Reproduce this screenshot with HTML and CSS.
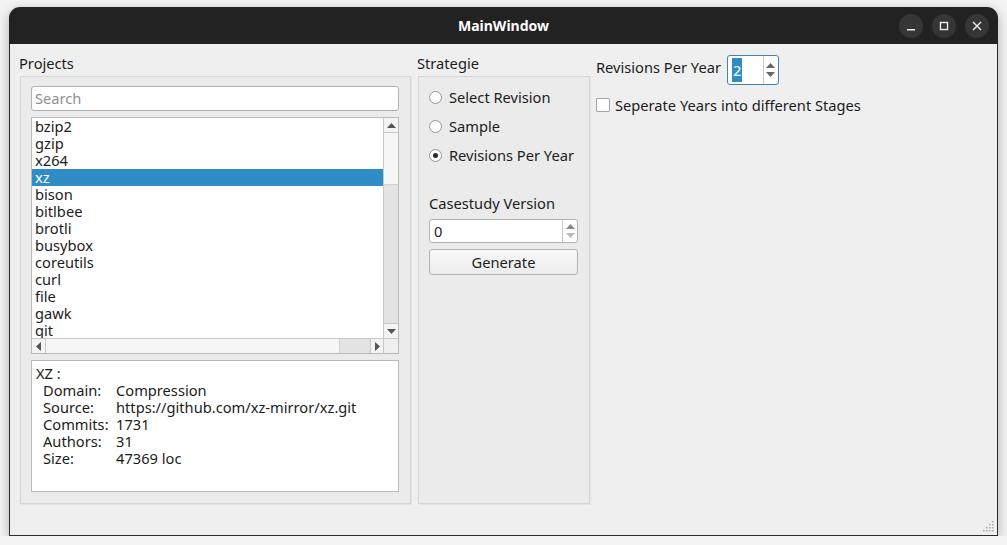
FILE: index.html
```html
<!DOCTYPE html>
<html lang="en">
<head>
    <meta charset="UTF-8">
    <meta name="viewport" content="width=device-width, initial-scale=1.0">
    <title>MainWindow</title>
    <link rel="stylesheet" href="styles.css">
</head>
<body>
    <div class="window">
        <div class="titlebar">
            <span></span>
            <span class="title">MainWindow</span>
            <div class="controls">
                <span class="ctl">
                    <svg width="24" height="24" viewBox="0 0 24 24"><rect x="8" y="15" width="8" height="1.5" fill="#eee"/></svg>
                </span>
                <span class="ctl">
                    <svg width="24" height="24" viewBox="0 0 24 24"><rect x="8.5" y="8.5" width="7" height="7" fill="none" stroke="#eee" stroke-width="1.4"/></svg>
                </span>
                <span class="ctl">
                    <svg width="24" height="24" viewBox="0 0 24 24"><path d="M8 8 L16 16 M16 8 L8 16" stroke="#eee" stroke-width="1.4"/></svg>
                </span>
            </div>
        </div>
        <div class="content">
            <div class="col projects-col">
                <div class="group-label">Projects</div>
                <div class="group projects">
                    <input class="search" type="text" placeholder="Search">
                    <div class="list">
                        <div class="list-items">
                            <div class="item">bzip2</div>
                            <div class="item">gzip</div>
                            <div class="item">x264</div>
                            <div class="item selected">xz</div>
                            <div class="item">bison</div>
                            <div class="item">bitlbee</div>
                            <div class="item">brotli</div>
                            <div class="item">busybox</div>
                            <div class="item">coreutils</div>
                            <div class="item">curl</div>
                            <div class="item">file</div>
                            <div class="item">gawk</div>
                            <div class="item">git</div>
                        </div>
                        <div class="vscroll">
                            <div class="sb-btn">
                                <svg width="9" height="5" viewBox="0 0 9 5"><path d="M0 5 L4.5 0 L9 5 Z" fill="#555"/></svg>
                            </div>
                            <div class="sb-handle v"></div>
                            <div class="sb-track"></div>
                            <div class="sb-btn">
                                <svg width="9" height="5" viewBox="0 0 9 5"><path d="M0 0 L4.5 5 L9 0 Z" fill="#555"/></svg>
                            </div>
                        </div>
                        <div class="hscroll">
                            <div class="sb-btn">
                                <svg width="5" height="9" viewBox="0 0 5 9"><path d="M5 0 L0 4.5 L5 9 Z" fill="#555"/></svg>
                            </div>
                            <div class="sb-handle h"></div>
                            <div class="sb-track h"></div>
                            <div class="sb-btn">
                                <svg width="5" height="9" viewBox="0 0 5 9"><path d="M0 0 L5 4.5 L0 9 Z" fill="#555"/></svg>
                            </div>
                        </div>
                        <div class="corner"></div>
                    </div>
                    <div class="info">
                        <div class="info-title">XZ :</div>
                        <div class="info-grid">
                            <span>Domain:</span><span>Compression</span>
                            <span>Source:</span><span>https://github.com/xz-mirror/xz.git</span>
                            <span>Commits:</span><span>1731</span>
                            <span>Authors:</span><span>31</span>
                            <span>Size:</span><span>47369 loc</span>
                        </div>
                    </div>
                </div>
            </div>

            <div class="col strategy-col">
                <div class="group-label">Strategie</div>
                <div class="group strategy">
                    <label class="radio-row"><span class="radio"></span>Select Revision</label>
                    <label class="radio-row"><span class="radio"></span>Sample</label>
                    <label class="radio-row"><span class="radio checked"></span>Revisions Per Year</label>
                    <div class="cs-label">Casestudy Version</div>
                    <div class="spinbox wide">
                        <span class="spin-value">0</span>
                        <span class="spin-arrows">
                            <svg width="9" height="5" viewBox="0 0 9 5"><path d="M0 5 L4.5 0 L9 5 Z" fill="#888"/></svg>
                            <svg width="9" height="5" viewBox="0 0 9 5"><path d="M0 0 L4.5 5 L9 0 Z" fill="#bbb"/></svg>
                        </span>
                    </div>
                    <button class="btn" type="button">Generate</button>
                </div>
            </div>

            <div class="col options-col">
                <div class="rpy-row">
                    <span class="rpy-label">Revisions Per Year</span>
                    <div class="spinbox small focus">
                        <span class="spin-value"><span class="sel">2</span></span>
                        <span class="spin-arrows">
                            <svg width="9" height="5" viewBox="0 0 9 5"><path d="M0 5 L4.5 0 L9 5 Z" fill="#666"/></svg>
                            <svg width="9" height="5" viewBox="0 0 9 5"><path d="M0 0 L4.5 5 L9 0 Z" fill="#666"/></svg>
                        </span>
                    </div>
                </div>
                <label class="check-row"><span class="checkbox"></span>Seperate Years into different Stages</label>
            </div>

            <svg class="grip" width="12" height="12" viewBox="0 0 12 12">
                <rect x="9" y="0" width="1.5" height="1.5" fill="#aaa"/>
                <rect x="6" y="3" width="1.5" height="1.5" fill="#aaa"/>
                <rect x="9" y="3" width="1.5" height="1.5" fill="#aaa"/>
                <rect x="3" y="6" width="1.5" height="1.5" fill="#aaa"/>
                <rect x="6" y="6" width="1.5" height="1.5" fill="#aaa"/>
                <rect x="9" y="6" width="1.5" height="1.5" fill="#aaa"/>
                <rect x="0" y="9" width="1.5" height="1.5" fill="#aaa"/>
                <rect x="3" y="9" width="1.5" height="1.5" fill="#aaa"/>
                <rect x="6" y="9" width="1.5" height="1.5" fill="#aaa"/>
                <rect x="9" y="9" width="1.5" height="1.5" fill="#aaa"/>
            </svg>
        </div>
    </div>
</body>
</html>
```

FILE: styles.css
```css
* {
    box-sizing: border-box;
}
body {
    margin: 0;
    background: #f3f3f3;
    font-family: "Noto Sans", "DejaVu Sans", sans-serif;
    font-size: 14.67px;
    color: #1c1c1c;
}
.window {
    margin: 7px 0 0 9px;
    width: 989px;
    height: 529px;
    border-radius: 11px 11px 0 0;
    overflow: hidden;
    box-shadow: 0 3px 12px rgba(0, 0, 0, 0.28);
    display: flex;
    flex-direction: column;
}
.titlebar {
    height: 37px;
    flex: none;
    background: #222222;
    display: grid;
    grid-template-columns: 1fr auto 1fr;
    align-items: center;
}
.title {
    color: #ffffff;
    font-weight: bold;
    font-size: 14px;
}
.controls {
    justify-self: end;
    display: flex;
    gap: 9px;
    padding-right: 9px;
}
.ctl {
    width: 24px;
    height: 24px;
    border-radius: 50%;
    background: #363636;
    display: flex;
}
.content {
    flex: 1;
    background: #efefef;
    border: 1px solid #2c2c2c;
    border-top: none;
    display: flex;
    padding: 10px 0 0 9px;
    position: relative;
}
.group-label {
    height: 22px;
    line-height: 19px;
}
.group {
    margin-left: 1px;
    height: 428px;
    background: #ebebeb;
    border: 1px solid #d6d6d6;
    box-shadow: 1px 1px 0 #e4e4e4;
}

/* projects */
.projects-col {
    width: 392px;
}
.projects {
    padding: 9px 11px 0 10px;
    display: flex;
    flex-direction: column;
    gap: 6px;
}
.search {
    height: 25px;
    flex: none;
    border: 1px solid #b2b2b2;
    border-radius: 3px;
    padding: 0 3px 1px;
    font-family: inherit;
    font-size: 14.67px;
    background: #ffffff;
    outline: none;
}
.search::placeholder {
    color: #8e8e8e;
}
.list {
    height: 237px;
    flex: none;
    border: 1px solid #bababa;
    background: #ffffff;
    display: grid;
    grid-template-columns: 1fr 15px;
    grid-template-rows: 1fr 15px;
    overflow: hidden;
}
.list-items {
    overflow: hidden;
}
.item {
    height: 17px;
    line-height: 17px;
    padding-left: 3px;
}
.item.selected {
    background: #308cc6;
    color: #ffffff;
}
.vscroll {
    display: flex;
    flex-direction: column;
    border-left: 1px solid #c8c8c8;
    background: #e3e3e3;
}
.hscroll {
    display: flex;
    border-top: 1px solid #c8c8c8;
    background: #e3e3e3;
}
.sb-btn {
    flex: none;
    width: 14px;
    height: 15px;
    background: #f4f4f4;
    display: flex;
    align-items: center;
    justify-content: center;
}
.vscroll .sb-btn:first-child {
    border-bottom: 1px solid #c8c8c8;
}
.vscroll .sb-btn:last-child {
    border-top: 1px solid #c8c8c8;
}
.hscroll .sb-btn {
    width: 14px;
    height: 14px;
}
.hscroll .sb-btn:first-child {
    border-right: 1px solid #c8c8c8;
}
.hscroll .sb-btn:last-child {
    width: 13px;
    border-left: 1px solid #c8c8c8;
}
.sb-handle.v {
    height: 52px;
    background: #f6f6f6;
    border-bottom: 1px solid #cfcfcf;
}
.sb-track {
    flex: 1;
}
.sb-handle.h {
    flex: 1;
    background: #f6f6f6;
    border-right: 1px solid #cfcfcf;
}
.sb-track.h {
    flex: none;
    width: 30px;
}
.corner {
    background: #efefef;
    border-top: 1px solid #c8c8c8;
    border-left: 1px solid #c8c8c8;
}
.info {
    height: 132px;
    flex: none;
    background: #ffffff;
    border: 1px solid #bababa;
    padding: 4px 4px;
    line-height: 17px;
}
.info-grid {
    display: grid;
    grid-template-columns: 73px auto;
    padding-left: 7px;
}

/* strategie */
.strategy-col {
    width: 173px;
    margin-left: 6px;
}
.strategy {
    padding: 10px 11px 0 10px;
    display: flex;
    flex-direction: column;
}
.radio-row {
    height: 20px;
    display: flex;
    align-items: center;
    gap: 7px;
    margin-bottom: 9px;
}
.radio {
    width: 13px;
    height: 13px;
    border-radius: 50%;
    border: 1px solid #959595;
    background: #ffffff;
    display: flex;
    align-items: center;
    justify-content: center;
}
.radio.checked::after {
    content: "";
    width: 5px;
    height: 5px;
    border-radius: 50%;
    background: #2a2a2a;
}
.cs-label {
    margin-top: 19px;
    height: 20px;
    line-height: 20px;
    margin-bottom: 6px;
}
.spinbox {
    display: flex;
    height: 24px;
    background: #ffffff;
    border: 1px solid #b2b2b2;
    border-radius: 3px;
}
.spinbox.wide {
    width: 149px;
}
.spin-value {
    flex: 1;
    line-height: 22px;
    padding-left: 4px;
}
.spin-arrows {
    width: 15px;
    border-left: 1px solid #c8c8c8;
    display: flex;
    flex-direction: column;
    align-items: center;
    justify-content: center;
    gap: 4px;
}
.btn {
    margin-top: 6px;
    width: 149px;
    height: 26px;
    font-family: inherit;
    font-size: 14.67px;
    color: #1c1c1c;
    background: linear-gradient(#f8f8f8, #ececec);
    border: 1px solid #b3b3b3;
    border-radius: 3px;
    padding: 0;
}

/* right options */
.options-col {
    margin-left: 6px;
    padding-top: 1px;
}
.rpy-row {
    display: flex;
    align-items: flex-start;
    gap: 6px;
}
.rpy-label {
    line-height: 20px;
    margin-top: 2px;
}
.spinbox.small {
    width: 52px;
    height: 30px;
}
.spinbox.small .spin-value {
    line-height: 28px;
}
.spinbox.focus {
    border-color: #3b82c0;
}
.sel {
    background: #308cc6;
    color: #ffffff;
    padding: 2px 1px;
}
.check-row {
    display: flex;
    align-items: center;
    gap: 5px;
    margin-top: 12px;
    height: 16px;
}
.checkbox {
    width: 14px;
    height: 14px;
    background: #ffffff;
    border: 1px solid #a5a5a5;
    border-radius: 1px;
}
.grip {
    position: absolute;
    right: 2px;
    bottom: 2px;
}
```
